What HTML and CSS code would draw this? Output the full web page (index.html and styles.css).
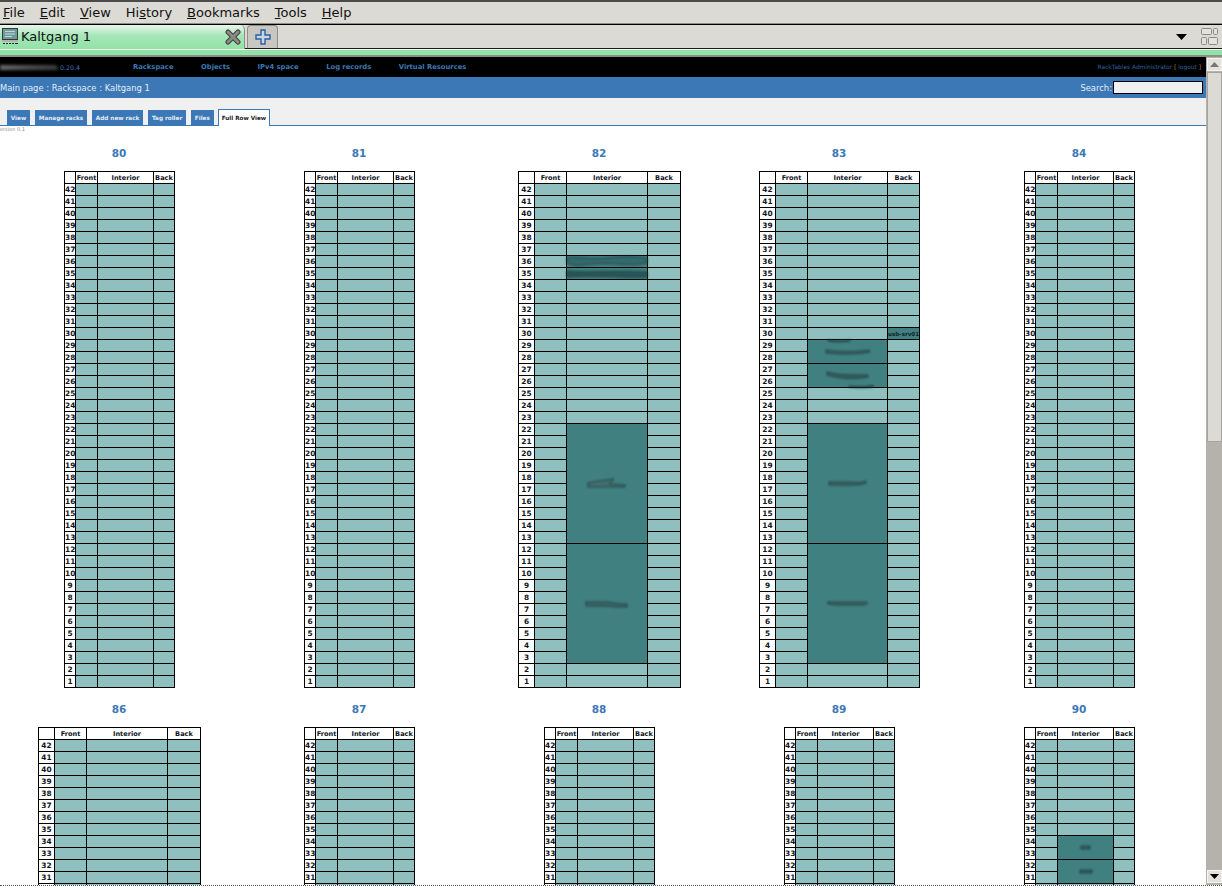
FILE: index.html
```html
<!DOCTYPE html>
<html lang="en">
<head>
  <meta charset="UTF-8">
  <title>Kaltgang 1</title>
  <link rel="stylesheet" href="styles.css">
</head>
<body>
  <div class="menubar">
    <span class="menu"><u>F</u>ile</span>
    <span class="menu"><u>E</u>dit</span>
    <span class="menu"><u>V</u>iew</span>
    <span class="menu">Hi<u>s</u>tory</span>
    <span class="menu"><u>B</u>ookmarks</span>
    <span class="menu"><u>T</u>ools</span>
    <span class="menu"><u>H</u>elp</span>
  </div>

  <div class="tabbar">
    <div class="tab">
      <svg class="tab-icon" width="17" height="17" viewBox="0 0 17 17">
        <rect x="0.5" y="0.5" width="15" height="11" fill="#6f9a9c" stroke="#33393b"/>
        <path d="M3 3.5h10M3 6h10M3 8.5h7" stroke="#c3d6d6" stroke-width="1"/>
        <rect x="0" y="12" width="16" height="2" fill="#aeb4b2"/>
        <path d="M1 15.5h2M4 15.5h2M7 15.5h2M10 15.5h2M13 15.5h3" stroke="#222" stroke-width="1"/>
      </svg>
      <span class="tab-title">Kaltgang 1</span>
      <svg class="tab-close" width="16" height="16" viewBox="0 0 16 16">
        <path d="M3 3L13 13M13 3L3 13" stroke="#3f3f3c" stroke-width="5" stroke-linecap="round"/>
        <path d="M3 3L13 13M13 3L3 13" stroke="#8b8b85" stroke-width="3" stroke-linecap="round"/>
      </svg>
    </div>
    <div class="tab-new">
      <svg width="16" height="16" viewBox="0 0 16 16">
        <path d="M6 1h4v5h5v4h-5v5H6v-5H1V6h5z" fill="#c4d5ea" stroke="#2f5f9e" stroke-width="1.4"/>
      </svg>
    </div>
    <div class="tab-spacer"></div>
    <svg class="tab-arrow" width="11" height="6" viewBox="0 0 11 6"><path d="M0 0h11L5.500 6z" fill="#000"/></svg>
    <svg class="tab-layout" width="17" height="17" viewBox="0 0 17 17">
      <g fill="#e4e2dd" stroke="#8a8a84">
        <rect x="0.500" y="0.500" width="10" height="6" rx="1"/>
        <rect x="12.500" y="0.500" width="4" height="6" rx="1"/>
        <rect x="0.500" y="9.500" width="5" height="7" rx="1"/>
        <rect x="7.500" y="9.500" width="9" height="7" rx="1"/>
      </g>
    </svg>
  </div>
  <div class="tab-strip"></div>

  <div class="viewport">
    <div class="page">
      <div class="topbar">
        <div class="logo"><span class="logo-smudge"></span><span class="version">0.20.4</span></div>
        <nav class="mainnav">
          <a>Rackspace</a>
          <a>Objects</a>
          <a>IPv4 space</a>
          <a>Log records</a>
          <a>Virtual Resources</a>
        </nav>
        <div class="userinfo">RackTables Administrator <span class="bracket">[</span> logout <span class="bracket">]</span></div>
      </div>
      <div class="pathbar">
        <div class="crumbs">Main page : Rackspace : Kaltgang 1</div>
        <div class="search">Search:<input class="search-box" type="text"></div>
      </div>
      <div class="tabs">
        <a class="pagetab">View</a>
        <a class="pagetab">Manage racks</a>
        <a class="pagetab">Add new rack</a>
        <a class="pagetab">Tag roller</a>
        <a class="pagetab">Files</a>
        <a class="pagetab current">Full Row View</a>
      </div>
      <div class="plugin-version">version 0.1</div>
      <div class="rackgrid" id="rackgrid"></div>
    </div>
    <div class="scrollbar">
      <div class="sb-button"><svg width="9" height="5" viewBox="0 0 9 5"><path d="M0 5h9L4.500 0z" fill="#77756f"/></svg></div>
      <div class="sb-thumb"></div>
      <div class="sb-button sb-down"><svg width="9" height="5" viewBox="0 0 9 5"><path d="M0 0h9L4.500 5z" fill="#000"/></svg></div>
    </div>
  </div>
  <div class="statusline"></div>

  <script src="racks.js"></script>
</body>
</html>
```

FILE: styles.css
```css
html, body {
  margin: 0;
  height: 888px;
  overflow: hidden;
}
body {
  display: flex;
  flex-direction: column;
  background-color: #fff;
  font-family: "DejaVu Sans", sans-serif;
}

/* browser chrome */
.menubar {
  display: flex;
  align-items: center;
  gap: 15px;
  height: 21px;
  padding-left: 3px;
  background-color: #dcdad5;
  border-top: 2px solid #4a4c4c;
  border-bottom: 1px solid #8f8d87;
  font-size: 13px;
  color: #111;
}
.tabbar {
  display: flex;
  align-items: flex-end;
  height: 23px;
  background-color: #dcdad5;
  border-top: 1px solid #000;
  border-bottom: 1px solid #1c1c1c;
}
.tab {
  display: flex;
  align-items: center;
  width: 245px;
  height: 24px;
  margin-bottom: -1px;
  box-sizing: border-box;
  padding: 0 3px 1px 2px;
  background: linear-gradient(#eaf6ec 0, #a5e6b8 45%, #92e3a7 100%);
  border-right: 1px solid #8f8d87;
  border-top-right-radius: 5px;
}
.tab-title {
  flex: 1;
  margin-left: 2px;
  font-size: 13px;
  color: #111;
}
.tab-new {
  display: flex;
  align-items: center;
  justify-content: center;
  width: 29px;
  height: 22px;
  margin-left: 2px;
  background-color: #c9c7c1;
  border: 1px solid #8f8d87;
  border-bottom: none;
  border-radius: 4px 4px 0 0;
}
.tab-spacer {
  flex: 1;
}
.tab-arrow {
  align-self: center;
  margin-right: 14px;
}
.tab-layout {
  align-self: center;
  margin-right: 4px;
}
.tab-strip {
  height: 5px;
  background-color: #92e3a7;
  border-top: 1px solid #f3f3f0;
  border-bottom: 2px solid #8f8d87;
}

.viewport {
  display: flex;
  flex: 1;
  min-height: 0;
}
.page {
  flex: 1;
  min-width: 0;
  overflow: hidden;
}
.scrollbar {
  display: flex;
  flex-direction: column;
  width: 15px;
  padding: 1px 0 2px 1px;
  background-color: #b5b2ab;
}
.sb-button {
  display: flex;
  align-items: center;
  justify-content: center;
  height: 13px;
  background-color: #e3e1dc;
  border: 1px solid #f5f4f1;
  box-sizing: border-box;
}
.sb-thumb {
  height: 370px;
  margin-top: 1px;
  background-color: #dcdad5;
  border: 1px solid #a5a39d;
  box-sizing: border-box;
}
.sb-down {
  margin-top: auto;
}
.statusline {
  height: 2px;
  border-top: 1px dotted #55554f;
}

/* racktables header */
.topbar {
  display: flex;
  align-items: center;
  height: 20px;
  background-color: #000;
}
.logo {
  display: flex;
  align-items: center;
  width: 133px;
  flex-shrink: 0;
}
.logo-smudge {
  width: 58px;
  height: 5px;
  background: linear-gradient(90deg, #6a6a6a, #4c4c4c 50%, #3a3a3a);
  border-top-right-radius: 4px;
  filter: blur(1.500px);
}
.version {
  margin-left: 2px;
  color: #3c78b5;
  font-size: 6.300px;
}
.mainnav {
  display: flex;
  gap: 27.500px;
  font-weight: bold;
  font-size: 6.800px;
  color: #3c78b5;
}
.userinfo {
  margin-left: auto;
  margin-right: 5px;
  font-size: 5.900px;
  color: #2f62a0;
}
.bracket {
  color: #c7782c;
}
.pathbar {
  display: flex;
  align-items: center;
  justify-content: space-between;
  height: 21px;
  background-color: #3c78b5;
  color: #e6edf5;
  font-size: 8.400px;
}
.search {
  display: flex;
  align-items: center;
  gap: 1px;
  margin-right: 3px;
}
.search-box {
  width: 90px;
  height: 13px;
  padding: 0;
  box-sizing: border-box;
  background-color: #f0f0f0;
  border: 1px solid #000;
}
.tabs {
  display: flex;
  align-items: flex-end;
  gap: 5px;
  height: 28px;
  padding-left: 7px;
  box-sizing: border-box;
  background-color: #f0f0f0;
  border-bottom: 1px solid #3c78b5;
}
.pagetab {
  padding: 0 3.800px;
  height: 15px;
  line-height: 16px;
  background-color: #3c78b5;
  color: #e6edf5;
  font-size: 5.700px;
  font-weight: bold;
}
.pagetab.current {
  margin-left: -1px;
  margin-bottom: -1px;
  height: 16px;
  padding: 0 3px;
  background-color: #fff;
  color: #1c1c1c;
  border: 1px solid #3c78b5;
  border-bottom: none;
}
.plugin-version {
  height: 6px;
  margin-left: -3px;
  line-height: 6px;
  font-size: 5px;
  color: #8a8a8a;
}

/* rack tables */
.rackgrid {
  display: grid;
  grid-template-columns: repeat(5, 240px);
  grid-auto-rows: 556px;
  margin-left: -0.500px;
  padding-top: 15px;
}
.rackcell {
  display: flex;
  flex-direction: column;
  align-items: center;
}
.rackname {
  height: 12px;
  margin-bottom: 12px;
  padding-right: 1px;
  line-height: 12px;
  font-size: 10.500px;
  font-weight: bold;
  color: #3c78b5;
  text-align: center;
}
.rack {
  width: 110px;
  border-collapse: collapse;
  table-layout: fixed;
  font-size: 6.600px;
  color: #10151f;
}
.rack td, .rack th {
  height: 11px;
  padding: 0;
  border: 1px solid #000;
  background-color: #fff;
  line-height: 8px;
  font-weight: bold;
  text-align: center;
  white-space: nowrap;
}
.rack th.unit {
  font-size: 7.400px;
}
.rack td.free {
  background-color: #8fbfbf;
}
.rack td.used {
  background-color: #408080;
  color: #10262a;
  font-size: 5.600px;
}
.col-unit { width: 11px; }
.col-side { width: 22px; }
.col-side.col-back { width: 21px; }
.col-inner { width: 56px; }
.rack-wide { width: 162px; }
.rack-wide .col-unit { width: 16px; }
.rack-wide .col-front { width: 32px; }
.rack-wide .col-inner { width: 81px; }
.rack-wide .col-back { width: 33px; }
.rack-mid { width: 160px; }
.rack-mid .col-unit { width: 16px; }
.rack-mid .col-front { width: 32px; }
.rack-mid .col-inner { width: 80px; }
.rack-mid .col-back { width: 32px; }

.smudge {
  display: block;
  margin: 0 auto;
  overflow: visible;
  filter: blur(0.800px);
}
.smudge path {
  fill-opacity: 0.7;
  stroke: #14282b;
  stroke-width: 1;
  stroke-dasharray: 2 1;
}
```

FILE: racks.js
```js
// row of racks for the full row view
// lowest: last unit drawn, the second row runs off the bottom of the window
var racks = [
  { name: 80, cls: '', lowest: 1 },
  { name: 81, cls: '', lowest: 1 },
  { name: 82, cls: 'rack-wide', lowest: 1, blocks: [
    { from: 36, to: 36, w: 80, h: 10, d: 'M0 1C12 -1 24 3 40 1S66 -1 80 1V6C60 10 44 5 26 7S8 9 0 6Z', color: '#2f5f62' },
    { from: 35, to: 35, w: 80, h: 10, d: 'M0 2C20 4 40 1 80 3V8C54 9 30 6 0 8Z', color: '#1f4448' },
    { from: 22, to: 13, w: 38, h: 12, d: 'M0 5C10 3 18 2 26 1C24 4 20 5 22 6L37 7V9L0 9Z', color: '#46666a' },
    { from: 12, to: 3, w: 42, h: 8, d: 'M0 2L22 2C28 3 32 4 41 4V7L30 7C24 6 14 6 0 6Z', color: '#3a5c62' }
  ] },
  { name: 83, cls: 'rack-mid', lowest: 1, blocks: [
    { from: 29, to: 28, w: 44, h: 6, d: 'M0 1C14 3 30 3 43 1L44 3C30 6 12 5 0 4Z M2 -9C8 -8 16 -8 24 -9V-8C16 -7 8 -7 2 -8Z', color: '#3a5a5f' },
    { from: 27, to: 26, w: 42, h: 8, d: 'M0 0C10 3 24 3 41 3V5C24 8 10 6 0 3Z M22 14C30 15 40 15 46 13V15C38 16 30 16 22 15Z', color: '#3a5055' },
    { from: 22, to: 13, w: 38, h: 5, d: 'M0 1L22 1C28 2 32 2 37 0V2C30 5 16 4 0 4Z', color: '#3c5a5f' },
    { from: 12, to: 3, w: 40, h: 5, d: 'M0 1H38L40 2L36 4H8L0 3Z', color: '#3c5a5f' }
  ], label: { unit: 30, text: 'usb-srv01' } },
  { name: 84, cls: '', lowest: 1 },
  { name: 86, cls: 'rack-wide', lowest: 30 },
  { name: 87, cls: '', lowest: 30 },
  { name: 88, cls: '', lowest: 30 },
  { name: 89, cls: '', lowest: 30 },
  { name: 90, cls: '', lowest: 30, blocks: [
    { from: 34, to: 33, w: 9, h: 5, d: 'M0 1H9V4H0Z', color: '#2c5a5e' },
    { from: 32, to: 31, w: 12, h: 5, d: 'M0 1H12V4H0Z', color: '#2c5058' }
  ] }
];

function findBlock(rack, unit) {
  var blocks = rack.blocks || [];
  for (var i = 0; i < blocks.length; i++) {
    if (unit <= blocks[i].from && unit >= blocks[i].to) return blocks[i];
  }
  return null;
}

function smudge(b) {
  return '<svg class="smudge" width="' + b.w + '" height="' + b.h + '" viewBox="0 0 ' + b.w + ' ' + b.h + '">' +
    '<path d="' + b.d + '" fill="' + b.color + '"/></svg>';
}

function rackHtml(rack) {
  var html = '<div class="rackcell"><div class="rackname">' + rack.name + '</div>';
  html += '<table class="rack ' + rack.cls + '"><colgroup><col class="col-unit"><col class="col-side col-front">' +
    '<col class="col-inner"><col class="col-side col-back"></colgroup>';
  html += '<tr><th></th><th>Front</th><th>Interior</th><th>Back</th></tr>';
  for (var u = 42; u >= rack.lowest; u--) {
    html += '<tr><th class="unit">' + u + '</th><td class="free"></td>';
    var b = findBlock(rack, u);
    if (!b) {
      html += '<td class="free"></td>';
    } else if (b.from === u) {
      html += '<td class="used" rowspan="' + (b.from - b.to + 1) + '">' + smudge(b) + '</td>';
    }
    if (rack.label && rack.label.unit === u) {
      html += '<td class="used">' + rack.label.text + '</td>';
    } else {
      html += '<td class="free"></td>';
    }
    html += '</tr>';
  }
  return html + '</table></div>';
}

document.getElementById('rackgrid').innerHTML = racks.map(rackHtml).join('');
```
